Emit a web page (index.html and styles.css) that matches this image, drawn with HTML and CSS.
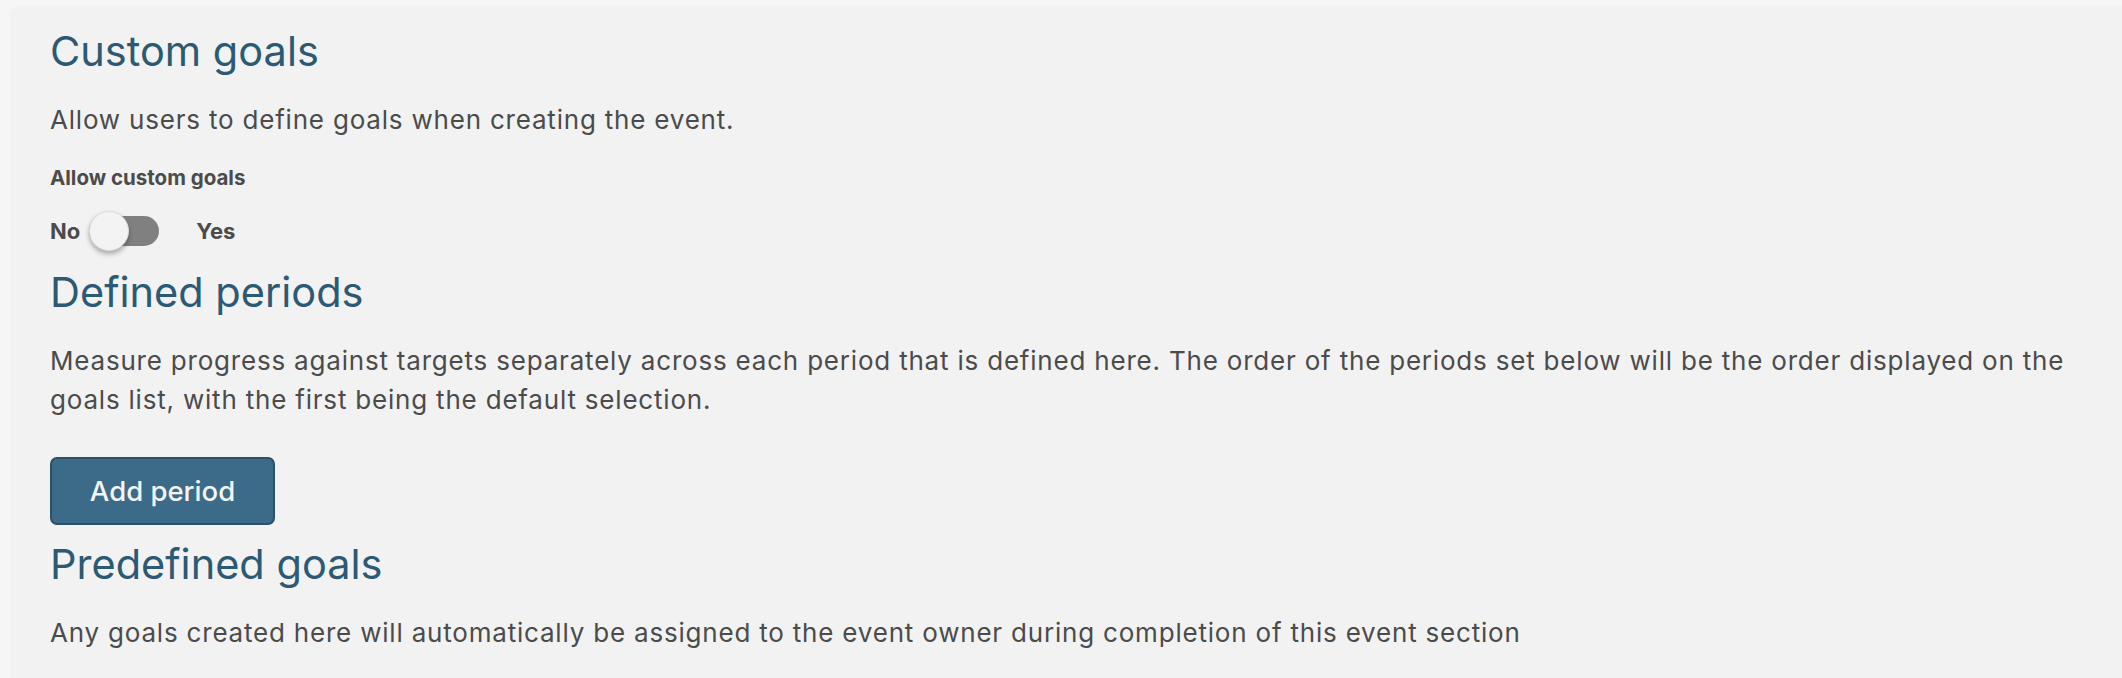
FILE: index.html
```html
<!DOCTYPE html>
<html lang="en">
<head>
<meta charset="utf-8">
<title>Goals settings</title>
<link rel="stylesheet" href="styles.css">
</head>
<body>
<div class="card">
  <section class="section">
    <h2 class="title">Custom goals</h2>
    <p class="desc">Allow users to define goals when creating the event.</p>
    <div class="field">
      <div class="field-label">Allow custom goals</div>
      <div class="switch-row">
        <span class="switch-text">No</span>
        <span class="switch"><span class="knob"></span></span>
        <span class="switch-text yes">Yes</span>
      </div>
    </div>
  </section>
  <section class="section">
    <h2 class="title">Defined periods</h2>
    <p class="desc">Measure progress against targets separately across each period that is defined here. The order of the periods set below will be the order displayed on the goals list, with the first being the default selection.</p>
    <button class="btn" type="button">Add period</button>
  </section>
  <section class="section">
    <h2 class="title">Predefined goals</h2>
    <p class="desc">Any goals created here will automatically be assigned to the event owner during completion of this event section</p>
  </section>
</div>
</body>
</html>
```

FILE: styles.css
```css
html, body {
  margin: 0;
  padding: 0;
}
body {
  background: #f6f6f6;
  font-family: Inter, "Liberation Sans", sans-serif;
  color: #4b4b4b;
}
.card {
  background: #f2f2f2;
  margin: 5px 0 0 10px;
  border-radius: 10px 0 0 0;
  padding: 20px 50px 20px 40px;
  min-height: calc(100vh - 5px);
  box-sizing: border-box;
}
.title {
  margin: 0;
  font-weight: 400;
  font-size: 41.5px;
  line-height: 52px;
  color: #2c5973;
}
.desc {
  margin: 23px 0 0;
  font-size: 26px;
  letter-spacing: 0.8px;
  line-height: 39px;
}
.field {
  margin-top: 24px;
  margin-bottom: 15px;
}
.field-label {
  font-size: 20.5px;
  font-weight: 700;
  line-height: 30px;
}
.switch-row {
  display: flex;
  align-items: center;
  margin-top: 18px;
  height: 40px;
}
.switch-text {
  font-size: 22px;
  font-weight: 700;
  line-height: 30px;
}
.switch {
  position: relative;
  width: 70px;
  height: 30px;
  margin-left: 9px;
  border-radius: 15px;
  background: #808080;
}
.knob {
  position: absolute;
  left: 0;
  top: -5px;
  width: 40px;
  height: 40px;
  box-sizing: border-box;
  border-radius: 50%;
  background: #f3f3f3;
  border: 1px solid #dcdcdc;
  box-shadow: 0 3px 5px rgba(0, 0, 0, 0.3);
}
.yes {
  margin-left: 37px;
}
.btn {
  margin-top: 38px;
  margin-bottom: 13px;
  display: block;
  width: 225px;
  height: 68px;
  box-sizing: border-box;
  border: 2px solid #2b5068;
  border-radius: 7px;
  background: #3c6b89;
  color: #f3f6f8;
  font-family: inherit;
  font-size: 27.5px;
  font-weight: 500;
}
.section + .section .title {
  margin-top: 4px;
}
```
